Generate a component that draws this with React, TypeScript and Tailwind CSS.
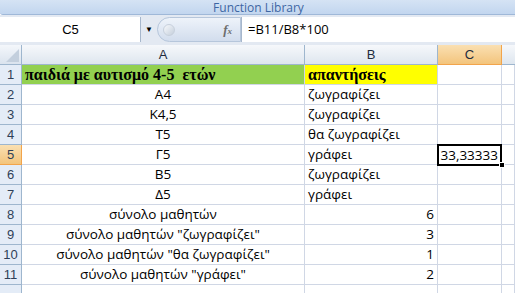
import React from 'react'

const rows: { a: React.ReactNode; b: React.ReactNode; bAlign?: 'left' | 'right'; c?: string }[] = [
  { a: 'Α4', b: 'ζωγραφίζει' },
  { a: 'Κ4,5', b: 'ζωγραφίζει' },
  { a: 'Τ5', b: 'θα ζωγραφίζει' },
  { a: 'Γ5', b: 'γράφει', c: '33,33333' },
  { a: 'Β5', b: 'ζωγραφίζει' },
  { a: 'Δ5', b: 'γράφει' },
  { a: 'σύνολο μαθητών', b: '6', bAlign: 'right' },
  { a: 'σύνολο μαθητών "ζωγραφίζει"', b: '3', bAlign: 'right' },
  { a: 'σύνολο μαθητών "θα ζωγραφίζει"', b: '1', bAlign: 'right' },
  { a: 'σύνολο μαθητών "γράφει"', b: '2', bAlign: 'right' },
]

const cell = 'h-[20px] border-r border-b border-[#d0d7e5] flex items-center overflow-hidden whitespace-nowrap'
const rowHead = 'h-[20px] border-r border-b border-[#9eb6ce] flex items-center justify-center text-[13px] text-[#2f3f57]'
const body = "font-['Open_Sans',sans-serif] text-[13.5px] text-black"

export default function App() {
  return (
    <div className="w-[515px] h-[293px] overflow-hidden bg-white font-['Liberation_Sans',Arial,sans-serif]">
      {/* ribbon group label */}
      <div className="h-[15px] bg-gradient-to-b from-[#d5e3f4] to-[#c2d6ef] border-b border-[#9fb8d8] rounded-bl-[3px] flex items-center justify-center font-['Open_Sans',sans-serif] text-[12px] leading-[13px] text-[#3d66a3] pl-[2px]">
        Function Library
      </div>

      {/* formula bar */}
      <div className="h-[30px] bg-[#e3e9f2] flex items-center pt-[2px] pb-[3px]">
        <div className="h-full w-[141px] bg-white border-r border-[#a7b7cc] flex items-center justify-center text-[13px] text-black pl-[1px]">C5</div>
        <div className="w-[16px] h-full flex items-center justify-center">
          <span className="text-[8px] text-black">▼</span>
        </div>
        <div className="h-full w-[84px] rounded-l-full bg-gradient-to-b from-[#eef3fa] to-[#d2dded] border border-[#b6c6db] flex items-center justify-between pl-[5px] pr-[8px]">
          <span className="w-[12px] h-[12px] rounded-full bg-gradient-to-br from-[#f7f9fc] to-[#c5cfdc] border border-[#c7d0dc]" />
          <span className="font-['Liberation_Serif',serif] italic font-bold text-[13px] text-[#6d6d6d]">
            f<span className="text-[9px]">x</span>
          </span>
        </div>
        <div className="h-full flex-1 bg-white border-l border-[#a7b7cc] flex items-center pl-[6px] font-['Open_Sans',sans-serif] text-[13px] text-black">
          =B11/B8*100
        </div>
      </div>

      {/* sheet */}
      <div className="grid grid-cols-[22px_283px_133px_64px_1fr]">
        {/* column headers */}
        <div className="h-[20px] bg-gradient-to-b from-[#f4f7fb] to-[#dae3ee] border-r border-b border-[#9eb6ce] flex items-end justify-end p-[2px]">
          <div className="w-0 h-0 border-l-[13px] border-l-transparent border-b-[13px] border-b-[#c3cfdd]" />
        </div>
        <div className="h-[20px] bg-gradient-to-b from-[#f6f8fb] to-[#dee6ef] border-r border-b border-[#9eb6ce] flex items-center justify-center text-[13px] text-[#1f2c3d]">A</div>
        <div className="h-[20px] bg-gradient-to-b from-[#f6f8fb] to-[#dee6ef] border-r border-b border-[#9eb6ce] flex items-center justify-center text-[13px] text-[#1f2c3d]">B</div>
        <div className="h-[20px] bg-gradient-to-b from-[#fae0b2] to-[#f3c47c] border-r border-b border-[#f2a44b] flex items-center justify-center text-[13px] text-[#1f2c3d]">C</div>
        <div className="h-[20px] bg-gradient-to-b from-[#f6f8fb] to-[#dee6ef] border-b border-[#9eb6ce]" />

        {/* row 1 */}
        <div className={`${rowHead} bg-[#e4ecf7]`}>1</div>
        <div className={`${cell} bg-[#92d050] pl-[3px] font-['Liberation_Serif',serif] font-bold text-[16px] text-black`}>
          παιδιά με αυτισμό 4-5&nbsp; ετών
        </div>
        <div className={`${cell} bg-[#ffff00] pl-[3px] font-['Liberation_Serif',serif] font-bold text-[16px] text-black`}>
          απαντήσεις
        </div>
        <div className={cell} />
        <div className={cell} />

        {rows.map((r, i) => {
          const n = i + 2
          const sel = n === 5
          return (
            <React.Fragment key={n}>
              <div
                className={
                  sel
                    ? `${rowHead} bg-gradient-to-b from-[#fae0b2] to-[#f3c47c] border-[#f2a44b]`
                    : `${rowHead} bg-[#e4ecf7]`
                }
              >
                {n}
              </div>
              <div className={`${cell} justify-center ${body}`}>{r.a}</div>
              <div className={`${cell} ${r.bAlign === 'right' ? 'justify-end pr-[3px]' : 'pl-[3px]'} ${body}`}>
                {r.b}
              </div>
              {sel ? (
                <div className="relative h-[20px] border-r border-b border-[#d0d7e5]">
                  <div className={`absolute -left-[1px] -top-[1px] w-[65px] h-[22px] border-2 border-black flex items-center justify-end pr-[2px] bg-white ${body}`}>
                    {r.c}
                  </div>
                  <div className="absolute -right-[4px] bottom-[-4px] w-[6px] h-[6px] bg-black border border-white" />
                </div>
              ) : (
                <div className={cell} />
              )}
              <div className={cell} />
            </React.Fragment>
          )
        })}

        {/* row 12, cut off by the window */}
        <div className={`${rowHead} bg-[#e4ecf7]`} />
        <div className={cell} />
        <div className={cell} />
        <div className={cell} />
        <div className={cell} />
      </div>
    </div>
  )
}
